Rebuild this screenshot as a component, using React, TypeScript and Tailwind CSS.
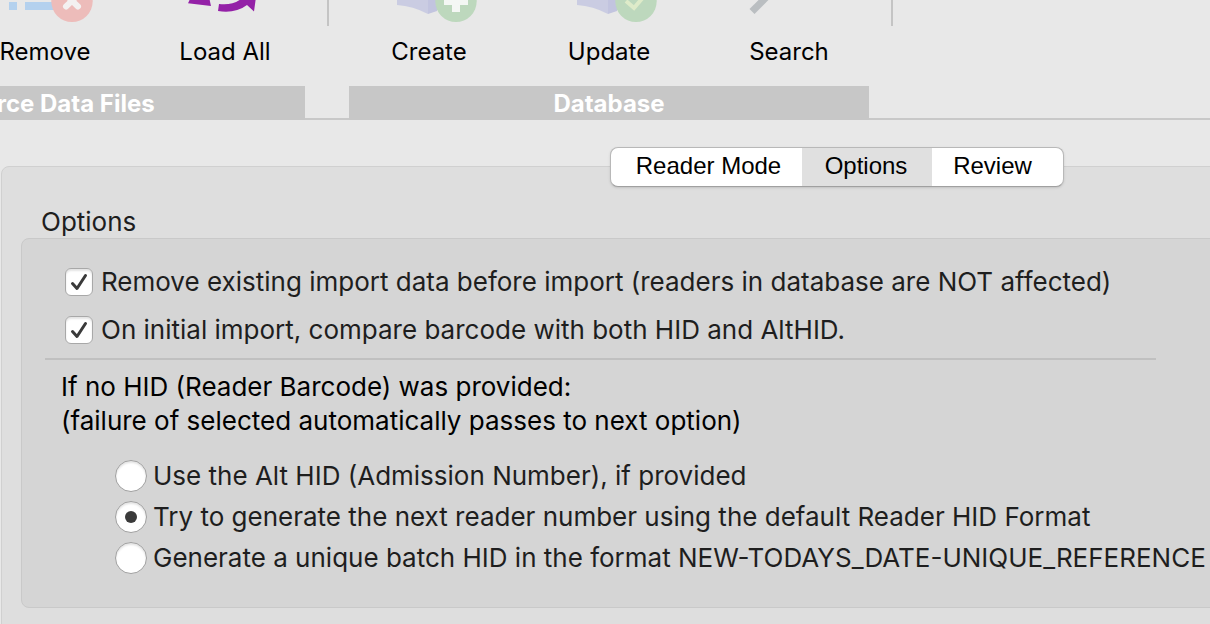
import type { ReactNode } from "react";

const ui = "font-['Inter','Noto_Sans',sans-serif]";

function RemoveIcon() {
  return (
    <svg viewBox="0 0 80 26" className="h-[26px] w-20 overflow-visible" aria-hidden="true">
      <path d="M4 2h8v8H4zM20 2h34v8H20z" fill="#b4d1ee" />
      <circle cx="67" cy="1.3" r="20.7" fill="#edbcba" />
      <path d="M61 -5l12 11.500M73 -5L61 6.500" stroke="#f3f1f1" strokeWidth="6" strokeLinecap="round" />
    </svg>
  );
}

function LoadAllIcon() {
  return (
    <svg viewBox="0 0 80 26" className="h-[26px] w-20 overflow-visible" aria-hidden="true">
      <path d="M3 3.300L26 6L24 -3L6 -3z" fill="#9421a7" />
      <path d="M34 4L33 11C44 13 54 11 62 5L69 11.500L71 -3H53L56 -1C50 3.500 43 5 34 4z" fill="#9421a7" />
    </svg>
  );
}

function BookIcon({ children }: { children: ReactNode }) {
  return (
    <svg viewBox="0 0 80 26" className="h-[26px] w-20 overflow-visible" aria-hidden="true">
      <path d="M8 -2V5Q24 6 39 14V-2z" fill="#cacce2" />
      <path d="M39 -2V14L48 11V-2z" fill="#c2c4df" />
      <circle cx="67" cy="1.3" r="20.7" fill="#bdd8bd" />
      {children}
    </svg>
  );
}

function SearchIcon() {
  return (
    <svg viewBox="0 0 80 26" className="h-[26px] w-20 overflow-visible" aria-hidden="true">
      <path d="M3 11.500L20 -5.500" stroke="#babec1" strokeWidth="7" />
    </svg>
  );
}

function Tool({ label, icon }: { label: string; icon: ReactNode }) {
  return (
    <button type="button" className="flex w-40 shrink-0 flex-col items-center gap-3">
      {icon}
      <span className="text-2xl leading-7">{label}</span>
    </button>
  );
}

function Group({ title, className, children }: { title: string; className: string; children: ReactNode }) {
  return (
    <section className={`flex shrink-0 flex-col gap-5 ${className}`}>
      <div className="flex justify-end gap-5">{children}</div>
      <h2 className="bg-[#c7c7c7] pt-0.5 text-center text-2xl leading-8 font-bold text-white">{title}</h2>
    </section>
  );
}

function Divider({ className }: { className: string }) {
  return (
    <div className={`border-b-2 border-[#c8c8c8] pl-[22px] ${className}`}>
      <div className="h-[26px] w-0.5 bg-[#c4c4c4]" />
    </div>
  );
}

function Check({ label }: { label: string }) {
  return (
    <label className="flex items-center gap-2">
      <span className="grid size-7 shrink-0 place-items-center">
        <input
          type="checkbox"
          defaultChecked
          className="peer col-start-1 row-start-1 size-7 appearance-none rounded-md border border-[#a8a8a8] bg-white shadow-[inset_0_2px_2px_#e4e4e4]"
        />
        <svg
          viewBox="0 0 28 28"
          className="pointer-events-none invisible col-start-1 row-start-1 size-7 peer-checked:visible"
          fill="none"
          stroke="#3a3a3a"
          strokeWidth="3"
          strokeLinecap="round"
          strokeLinejoin="round"
          aria-hidden="true"
        >
          <path d="M7.500 15.500l4.500 5L20.500 7.500" />
        </svg>
      </span>
      <span className="whitespace-nowrap">{label}</span>
    </label>
  );
}

function Radio({ label, checked }: { label: string; checked?: boolean }) {
  return (
    <label className="flex items-center gap-1.5">
      <span className="grid size-8 shrink-0 place-items-center">
        <input
          type="radio"
          name="hid-fallback"
          defaultChecked={checked}
          className="peer col-start-1 row-start-1 size-8 appearance-none rounded-full border border-[#a0a0a0] bg-white shadow-[inset_0_2px_2px_#e4e4e4]"
        />
        <span className="pointer-events-none invisible col-start-1 row-start-1 size-3 rounded-full bg-[#3a3a3a] peer-checked:visible" />
      </span>
      <span className="whitespace-nowrap">{label}</span>
    </label>
  );
}

export default function App() {
  return (
    <div className={`min-h-screen overflow-hidden bg-[#e8e8e8] text-black ${ui}`}>
      <header className="flex">
        <Group title="Source Data Files" className="-ml-[199px] w-[504px]">
          <Tool label="Remove" icon={<RemoveIcon />} />
          <Tool label="Load All" icon={<LoadAllIcon />} />
        </Group>
        <Divider className="w-11 shrink-0" />
        <Group title="Database" className="w-[520px]">
          <Tool
            label="Create"
            icon={
              <BookIcon>
                <path d="M67 -11V12M55 1H79" stroke="#f4f7f4" strokeWidth="8" />
              </BookIcon>
            }
          />
          <Tool
            label="Update"
            icon={
              <BookIcon>
                <path d="M57 1l8 7L77 -6" fill="none" stroke="#deebc9" strokeWidth="4" />
              </BookIcon>
            }
          />
          <Tool label="Search" icon={<SearchIcon />} />
        </Group>
        <Divider className="flex-1" />
      </header>

      <main className="pt-[27px]">
        <nav className="relative z-10 ml-[610px] flex">
          <div className="flex h-10 overflow-hidden rounded-lg border border-[#b8b8b8] border-b-[#a0a0a0] bg-white font-['Liberation_Sans',Arial,sans-serif] text-2xl leading-9 shadow-sm">
            <button type="button" className="w-[191px] pb-0.5 pl-1">Reader Mode</button>
            <button type="button" className="w-[130px] bg-[#e0e0e0] pr-0.5 pb-0.5">Options</button>
            <button type="button" className="w-[131px] pr-2.5 pb-0.5">Review</button>
          </div>
        </nav>

        <div className="-mt-[21px] -mr-4 ml-px rounded-lg border border-[#d0d0d0] bg-[#dedede] pt-[39px] pb-8 pl-[19px]">
          <fieldset className="text-[26px] leading-8 text-[#1e1e1e]">
            <legend className="pl-5">Options</legend>
            <div className="rounded-lg border border-[#c9c9c9] bg-[#d5d5d5] pt-[27px] pr-4 pb-[33px] pl-[23px]">
              <div className="flex flex-col gap-4 pl-5">
                <Check label="Remove existing import data before import (readers in database are NOT affected)" />
                <Check label="On initial import, compare barcode with both HID and AltHID." />
              </div>
              <hr className="mt-3 mr-[52px] border-t-2 border-[#c0c0c0]" />
              <p className="mt-2.5 pl-4 leading-[34px] text-black">
                If no HID (Reader Barcode) was provided:
                <br />
                (failure of selected automatically passes to next option)
              </p>
              <div className="mt-[22px] flex flex-col gap-[9px] pl-[70px]">
                <Radio label="Use the Alt HID (Admission Number), if provided" />
                <Radio label="Try to generate the next reader number using the default Reader HID Format" checked />
                <Radio label="Generate a unique batch HID in the format NEW-TODAYS_DATE-UNIQUE_REFERENCE" />
              </div>
            </div>
          </fieldset>
        </div>
      </main>
    </div>
  );
}
